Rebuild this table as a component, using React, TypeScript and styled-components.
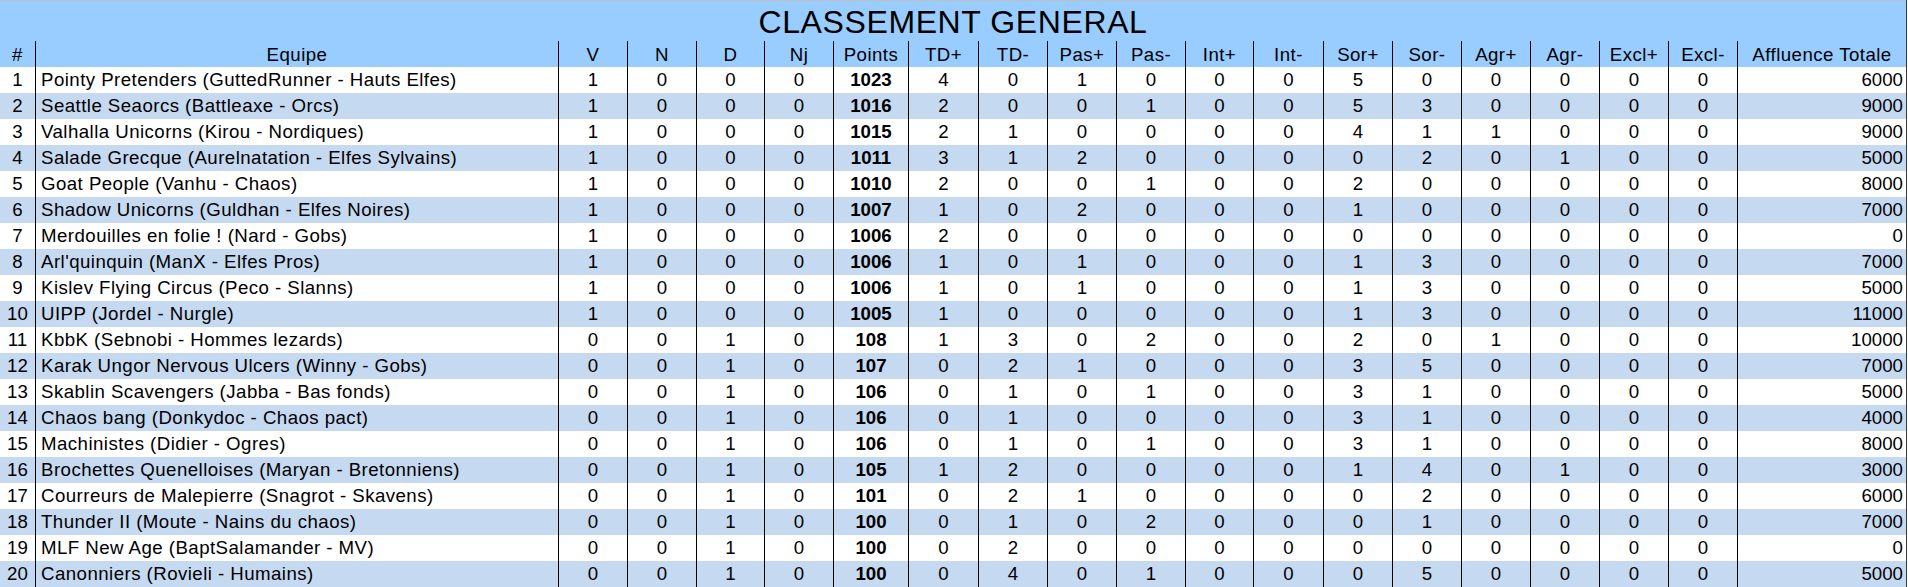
import React from "react";
import styled, { createGlobalStyle } from "styled-components";

const GlobalStyle = createGlobalStyle`
  html, body {
    margin: 0;
    padding: 0;
    background: #ffffff;
  }
  body {
    font-family: "Liberation Sans", Arial, sans-serif;
    color: #000;
  }
`;

// column widths (px) — # / Equipe / 17 stat columns / Affluence
const COLS = "35px 523px 69px 69px 68px 69px 75px 70px 69px 69px 69px 68px 70px 69px 69px 69px 69px 69px 69px 169px";

const HEADERS = [
  "#", "Equipe", "V", "N", "D", "Nj", "Points", "TD+", "TD-", "Pas+", "Pas-",
  "Int+", "Int-", "Sor+", "Sor-", "Agr+", "Agr-", "Excl+", "Excl-", "Affluence Totale",
];

type Team = { name: string; stats: number[]; affluence: number };

// stats: V N D Nj Points TD+ TD- Pas+ Pas- Int+ Int- Sor+ Sor- Agr+ Agr- Excl+ Excl-
const TEAMS: Team[] = [
  { name: "Pointy Pretenders (GuttedRunner - Hauts Elfes)", stats: [1, 0, 0, 0, 1023, 4, 0, 1, 0, 0, 0, 5, 0, 0, 0, 0, 0], affluence: 6000 },
  { name: "Seattle Seaorcs (Battleaxe - Orcs)", stats: [1, 0, 0, 0, 1016, 2, 0, 0, 1, 0, 0, 5, 3, 0, 0, 0, 0], affluence: 9000 },
  { name: "Valhalla Unicorns (Kirou - Nordiques)", stats: [1, 0, 0, 0, 1015, 2, 1, 0, 0, 0, 0, 4, 1, 1, 0, 0, 0], affluence: 9000 },
  { name: "Salade Grecque (Aurelnatation - Elfes Sylvains)", stats: [1, 0, 0, 0, 1011, 3, 1, 2, 0, 0, 0, 0, 2, 0, 1, 0, 0], affluence: 5000 },
  { name: "Goat People (Vanhu - Chaos)", stats: [1, 0, 0, 0, 1010, 2, 0, 0, 1, 0, 0, 2, 0, 0, 0, 0, 0], affluence: 8000 },
  { name: "Shadow Unicorns (Guldhan - Elfes Noires)", stats: [1, 0, 0, 0, 1007, 1, 0, 2, 0, 0, 0, 1, 0, 0, 0, 0, 0], affluence: 7000 },
  { name: "Merdouilles en folie ! (Nard - Gobs)", stats: [1, 0, 0, 0, 1006, 2, 0, 0, 0, 0, 0, 0, 0, 0, 0, 0, 0], affluence: 0 },
  { name: "Arl'quinquin (ManX - Elfes Pros)", stats: [1, 0, 0, 0, 1006, 1, 0, 1, 0, 0, 0, 1, 3, 0, 0, 0, 0], affluence: 7000 },
  { name: "Kislev Flying Circus (Peco - Slanns)", stats: [1, 0, 0, 0, 1006, 1, 0, 1, 0, 0, 0, 1, 3, 0, 0, 0, 0], affluence: 5000 },
  { name: "UIPP (Jordel - Nurgle)", stats: [1, 0, 0, 0, 1005, 1, 0, 0, 0, 0, 0, 1, 3, 0, 0, 0, 0], affluence: 11000 },
  { name: "KbbK (Sebnobi - Hommes lezards)", stats: [0, 0, 1, 0, 108, 1, 3, 0, 2, 0, 0, 2, 0, 1, 0, 0, 0], affluence: 10000 },
  { name: "Karak Ungor Nervous Ulcers (Winny - Gobs)", stats: [0, 0, 1, 0, 107, 0, 2, 1, 0, 0, 0, 3, 5, 0, 0, 0, 0], affluence: 7000 },
  { name: "Skablin Scavengers (Jabba - Bas fonds)", stats: [0, 0, 1, 0, 106, 0, 1, 0, 1, 0, 0, 3, 1, 0, 0, 0, 0], affluence: 5000 },
  { name: "Chaos bang (Donkydoc - Chaos pact)", stats: [0, 0, 1, 0, 106, 0, 1, 0, 0, 0, 0, 3, 1, 0, 0, 0, 0], affluence: 4000 },
  { name: "Machinistes (Didier - Ogres)", stats: [0, 0, 1, 0, 106, 0, 1, 0, 1, 0, 0, 3, 1, 0, 0, 0, 0], affluence: 8000 },
  { name: "Brochettes Quenelloises (Maryan - Bretonniens)", stats: [0, 0, 1, 0, 105, 1, 2, 0, 0, 0, 0, 1, 4, 0, 1, 0, 0], affluence: 3000 },
  { name: "Courreurs de Malepierre (Snagrot - Skavens)", stats: [0, 0, 1, 0, 101, 0, 2, 1, 0, 0, 0, 0, 2, 0, 0, 0, 0], affluence: 6000 },
  { name: "Thunder II (Moute - Nains du chaos)", stats: [0, 0, 1, 0, 100, 0, 1, 0, 2, 0, 0, 0, 1, 0, 0, 0, 0], affluence: 7000 },
  { name: "MLF New Age (BaptSalamander - MV)", stats: [0, 0, 1, 0, 100, 0, 2, 0, 0, 0, 0, 0, 0, 0, 0, 0, 0], affluence: 0 },
  { name: "Canonniers (Rovieli - Humains)", stats: [0, 0, 1, 0, 100, 0, 4, 0, 1, 0, 0, 0, 5, 0, 0, 0, 0], affluence: 5000 },
];

const Sheet = styled.div`
  width: 1907px;
  border-right: 1px solid #3a3a3a;
  box-sizing: border-box;
`;

const TitleRow = styled.div`
  height: 41px;
  border-top: 1px solid #c0c0c0;
  box-sizing: border-box;
  background: #99ccff;
  text-align: center;
  font-size: 32px;
  letter-spacing: 0.6px;
  line-height: 42px;
`;

const Row = styled.div<{ $bg: string }>`
  display: grid;
  grid-template-columns: ${COLS};
  height: 26px;
  background: ${(p) => p.$bg};
`;

const Cell = styled.div<{ $align?: "left" | "center" | "right"; $bold?: boolean; $head?: boolean }>`
  box-sizing: border-box;
  border-left: 1px solid #000;
  font-size: 18.67px;
  line-height: ${(p) => (p.$head ? "28px" : "26px")};
  letter-spacing: ${(p) => (p.$align === "left" || p.$head ? "0.45px" : "0")};
  white-space: nowrap;
  overflow: hidden;
  text-align: ${(p) => p.$align || "center"};
  font-weight: ${(p) => (p.$bold ? 700 : 400)};
  padding: ${(p) => (p.$align === "left" ? "0 0 0 5px" : p.$align === "right" ? "0 3px 0 0" : "0")};

  &:first-child {
    border-left: none;
  }
`;

const App: React.FC = () => {
  return (
    <>
      <GlobalStyle />
      <Sheet>
        <TitleRow>CLASSEMENT GENERAL</TitleRow>

        <Row $bg="#99ccff">
          {HEADERS.map((h) => (
            <Cell key={h} $head>
              {h}
            </Cell>
          ))}
        </Row>

        {TEAMS.map((t, i) => (
          <Row key={t.name} $bg={i % 2 === 0 ? "#ffffff" : "#c5d9f1"}>
            <Cell>{i + 1}</Cell>
            <Cell $align="left">{t.name}</Cell>
            {t.stats.map((v, j) => (
              <Cell key={j} $bold={j === 4}>
                {v}
              </Cell>
            ))}
            <Cell $align="right">{t.affluence}</Cell>
          </Row>
        ))}
      </Sheet>
    </>
  );
};

export default App;
